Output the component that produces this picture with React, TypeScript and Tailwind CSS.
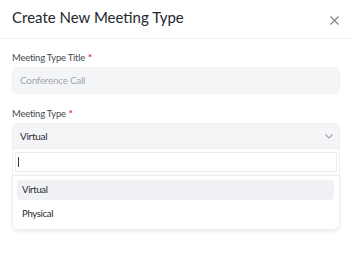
import React from "react";

export default function App() {
  return (
    <div className="w-[352px] h-[268px] bg-white" style={{ fontFamily: "Lato, 'Open Sans', sans-serif" }}>
      <div className="flex items-center justify-between h-[39px] pl-3 pr-[13px] pb-[3px] border-b border-[#f0f1f3]">
        <h1 className="text-[15px] text-[#23272e] leading-none">Create New Meeting Type</h1>
        <svg width="9" height="9" viewBox="0 0 9 9" className="mt-[5px]">
          <path d="M0.5 0.5 L8.5 8.5 M8.5 0.5 L0.5 8.5" stroke="#7b7f87" strokeWidth="1.1" />
        </svg>
      </div>
      <div className="px-3 pt-[13px]">
        <div className="text-[9.5px] tracking-[-0.25px] text-[#454a52] leading-[12px] flex gap-[3px]">
          Meeting Type Title <span className="text-[#e5252a] font-bold">*</span>
        </div>
        <div className="mt-[3px] h-[27px] rounded-[6px] bg-[#f4f5f7] border border-[#eef0f2] flex items-center pl-[7px] text-[10px] tracking-[-0.3px] text-[#a3a8b0]">
          Conference Call
        </div>
        <div className="mt-[14px] text-[9.5px] tracking-[-0.25px] text-[#454a52] leading-[12px] flex gap-[3px]">
          Meeting Type <span className="text-[#e5252a] font-bold">*</span>
        </div>
        <div className="mt-[3px] relative">
          <div className="h-[26px] rounded-t-[6px] bg-[#f4f5f7] border border-[#eceef1] flex items-center justify-between pl-[7px] pr-[6px] text-[10px] tracking-[-0.3px] text-[#262a31]">
            <span>Virtual</span>
            <svg width="8" height="5" viewBox="0 0 8 5" className="mt-[1px]">
              <path d="M0.5 0.5 L4 4 L7.5 0.5" stroke="#a0a4ab" strokeWidth="1.1" fill="none" />
            </svg>
          </div>
          <div className="border-x border-[#eceef1] px-[2px] py-[3px] bg-white">
            <div className="h-[20px] border border-[#e9ebee] rounded-[2px] flex items-center pl-[2px]">
              <div className="w-[1px] h-[10px] bg-[#3a3e45]" />
            </div>
          </div>
          <div className="h-[55px] rounded-b-[6px] bg-white border border-[#eceef1] shadow-[0_2px_5px_rgba(0,0,0,0.07)] pl-[4px] pr-[5px] pt-[4px]">
            <div className="h-[20px] rounded-[4px] bg-[#f0f1f5] flex items-center pl-[5px] text-[9.5px] tracking-[-0.3px] text-[#262a31]">Virtual</div>
            <div className="h-[20px] mt-[4px] flex items-center pl-[5px] text-[9.5px] tracking-[-0.3px] text-[#262a31]">Physical</div>
          </div>
        </div>
      </div>
    </div>
  );
}
